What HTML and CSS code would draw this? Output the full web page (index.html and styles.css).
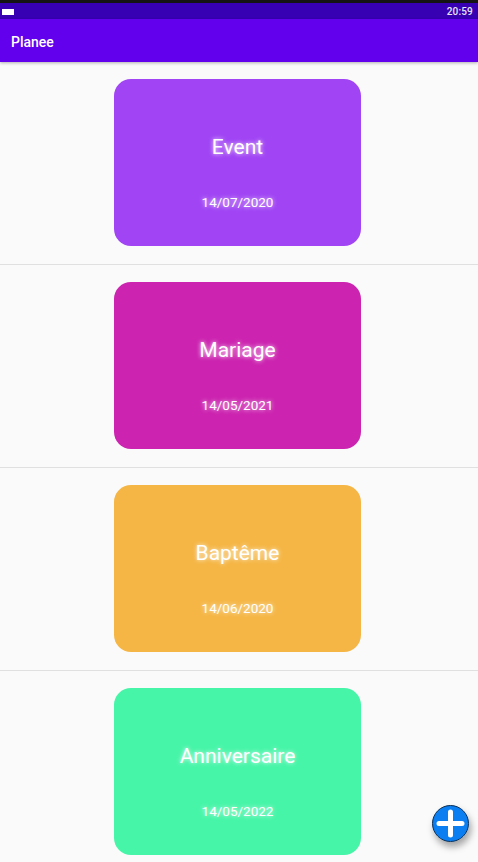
FILE: index.html
```html
<!DOCTYPE html>
<html lang="fr">
<head>
<meta charset="utf-8">
<title>Planee</title>
<link rel="stylesheet" href="styles.css">
</head>
<body>
<div class="screen">
  <div class="topline"></div>
  <div class="statusbar">
    <span class="battery"></span>
    <span class="time">20:59</span>
  </div>
  <header class="appbar">Planee</header>
  <main class="list">
    <div class="item">
      <div class="card c1">
        <div class="title">Event</div>
        <div class="date">14/07/2020</div>
      </div>
    </div>
    <div class="item">
      <div class="card c2">
        <div class="title">Mariage</div>
        <div class="date">14/05/2021</div>
      </div>
    </div>
    <div class="item">
      <div class="card c3">
        <div class="title">Baptême</div>
        <div class="date">14/06/2020</div>
      </div>
    </div>
    <div class="item">
      <div class="card c4">
        <div class="title">Anniversaire</div>
        <div class="date">14/05/2022</div>
      </div>
    </div>
  </main>
  <button class="fab" aria-label="Ajouter">
    <svg width="37" height="37" viewBox="0 0 37 37">
      <circle cx="18.5" cy="18.5" r="18" fill="#0b7ef2" stroke="#0a2f55" stroke-width="1"/>
      <path d="M18.5 7 V30 M7 18.5 H30" stroke="#fff" stroke-width="5" stroke-linecap="round"/>
    </svg>
  </button>
</div>
</body>
</html>
```
FILE: styles.css
```css
* { box-sizing: border-box; }
html, body { margin: 0; padding: 0; }
body {
  width: 478px;
  height: 862px;
  overflow: hidden;
  background: #fafafa;
  font-family: Roboto, "Noto Sans", sans-serif;
}
.screen { position: relative; width: 478px; height: 862px; overflow: hidden; }
.topline { height: 3px; background: #141414; }
.statusbar {
  height: 16px;
  background: #3700b3;
  display: flex;
  align-items: center;
  justify-content: space-between;
  padding: 0 5px 0 2px;
}
.battery { width: 12px; height: 6px; background: #fff; display: block; margin-top: 1px; }
.time { color: #e8e4f4; font-size: 10px; font-weight: 500; letter-spacing: 0.2px; }
.appbar {
  height: 43px;
  background: #6200ee;
  color: #fff;
  font-size: 14px;
  font-weight: 500;
  display: flex;
  align-items: center;
  padding: 2px 11px 0;
  box-shadow: 0 1px 3px rgba(0,0,0,0.3);
  position: relative;
  z-index: 1;
}
.list { display: flex; flex-direction: column; }
.item {
  display: flex;
  justify-content: center;
  padding: 17px 3px 18px 0;
  border-bottom: 1px solid #e0e0e0;
}
.card {
  width: 247px;
  height: 167px;
  border-radius: 17px;
  display: flex;
  flex-direction: column;
  align-items: center;
  color: #fff;
  text-shadow: 0 0 4px rgba(255,255,255,0.9);
}
.title { font-size: 21px; margin-top: 56px; line-height: 24px; }
.date { font-size: 13.5px; margin-top: 35px; line-height: 16px; }
.c1 { background: #a145f4; }
.c2 { background: #cc24b0; }
.c3 { background: #f5b645; }
.c4 { background: #46f5a8; }
.fab {
  position: absolute;
  left: 432px;
  top: 805px;
  width: 37px;
  height: 37px;
  padding: 0;
  border: none;
  background: none;
  border-radius: 50%;
  box-shadow: 2px 5px 7px rgba(0,0,0,0.35);
}
.fab svg { display: block; }
```
